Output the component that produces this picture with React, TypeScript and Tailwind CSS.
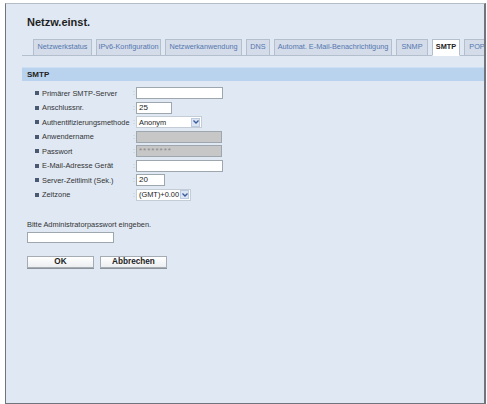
import { ReactNode } from "react";

const tabs = [
  { label: "Netzwerkstatus", w: "w-[59px]" },
  { label: "IPv6-Konfiguration", w: "w-[65px]" },
  { label: "Netzwerkanwendung", w: "w-[77px]" },
  { label: "DNS", w: "w-[24px]" },
  { label: "Automat. E-Mail-Benachrichtigung", w: "w-[118px]" },
  { label: "SNMP", w: "w-[32px]" },
  { label: "SMTP", w: "w-[28px]", active: true },
  { label: "POP3", w: "w-[30px]" },
];

function TextBox({ w, value, disabled }: { w: string; value?: string; disabled?: boolean }) {
  return (
    <div
      className={`${w} h-[12px] border border-[#9ea6ae] flex items-center px-[2px] text-[8px] leading-none ${
        disabled ? "bg-[#c7c7c7] text-[#8a8a8a] tracking-[1px]" : "bg-white text-[#222]"
      }`}
    >
      {value}
    </div>
  );
}

function SelectBox({ w, value }: { w: string; value: string }) {
  return (
    <div className={`${w} h-[12px] bg-white border border-[#c4ccd6] flex items-center text-[7.4px] leading-none text-[#222] whitespace-nowrap`}>
      <span className="flex-1 pl-[2px]">{value}</span>
      <span className="w-[9px] h-[9px] mr-[1px] bg-[#dbe5f4] border border-[#bccbe0] flex items-center justify-center">
        <svg width="6" height="4" viewBox="0 0 6 4">
          <path d="M0.5 0.5 L3 3 L5.5 0.5" fill="none" stroke="#3b5a99" strokeWidth="1.3" />
        </svg>
      </span>
    </div>
  );
}

function Row({ label, children }: { label: string; children: ReactNode }) {
  return (
    <div className="h-[14.5px] flex items-center pl-[13px]">
      <span className="w-[4px] h-[4px] bg-[#4a5870] mr-[3px]" />
      <span className="w-[91px] text-[7.4px] text-[#333]">{label}</span>
      <span className="w-[3px] text-[7px] text-[#a8b0ba]">:</span>
      {children}
    </div>
  );
}

export default function App() {
  return (
    <div className="w-[487px] h-[404px] bg-white pt-[3px] pl-[5px] font-['Liberation_Sans',Arial,sans-serif]">
      <div className="w-[481px] h-[401px] overflow-hidden bg-[#dfe8f3] border border-[#70757b] border-t-[#b4bcc6] border-r-2">
        <div className="pl-[21px] pt-[12px] text-[11px] leading-[12px] font-bold text-[#1f1f1f]">Netzw.einst.</div>

        <div className="mt-[11px] ml-[16px] pl-[11px] flex gap-[4px] border-b border-[#b3bfcd] whitespace-nowrap">
          {tabs.map((t) => (
            <div
              key={t.label}
              className={`${t.w} shrink-0 h-[17px] -mb-px flex items-center justify-center text-[7.3px] border border-[#b3bfcd] ${
                t.active
                  ? "bg-white border-b-white font-bold text-[#222]"
                  : "bg-[#d3dce8] text-[#5577b0]"
              }`}
            >
              {t.label}
            </div>
          ))}
        </div>

        <div className="mt-[11px] ml-[16px] h-[14px] bg-[#b9d3ee] border-t border-[#cddff2] flex items-center pl-[5px] text-[8px] font-bold text-[#222]">
          SMTP
        </div>

        <div className="mt-[5px] ml-[16px]">
          <Row label="Primärer SMTP-Server">
            <TextBox w="w-[87px]" />
          </Row>
          <Row label="Anschlussnr.">
            <TextBox w="w-[36px]" value="25" />
          </Row>
          <Row label="Authentifizierungsmethode">
            <SelectBox w="w-[66px]" value="Anonym" />
          </Row>
          <Row label="Anwendername">
            <TextBox w="w-[86px]" disabled />
          </Row>
          <Row label="Passwort">
            <TextBox w="w-[86px]" value="********" disabled />
          </Row>
          <Row label="E-Mail-Adresse Gerät">
            <TextBox w="w-[87px]" />
          </Row>
          <Row label="Server-Zeitlimit (Sek.)">
            <TextBox w="w-[29px]" value="20" />
          </Row>
          <Row label="Zeitzone">
            <SelectBox w="w-[55px]" value="(GMT)+0.00" />
          </Row>
        </div>

        <div className="ml-[21px] mt-[18px]">
          <div className="text-[7.4px] leading-[10px] text-[#333]">Bitte Administratorpasswort eingeben.</div>
          <div className="mt-[2px] w-[87px] h-[11px] bg-white border border-[#9ea6ae]" />
          <div className="mt-[13px] flex gap-[6px]">
            <button className="w-[67px] h-[12px] bg-gradient-to-b from-white to-[#eceef0] border border-[#a5acb4] shadow-[0_1px_0_#8c939b] text-[8.2px] leading-none font-bold text-[#222]">
              OK
            </button>
            <button className="w-[67px] h-[12px] bg-gradient-to-b from-white to-[#eceef0] border border-[#a5acb4] shadow-[0_1px_0_#8c939b] text-[8.2px] leading-none font-bold text-[#222]">
              Abbrechen
            </button>
          </div>
        </div>
      </div>
    </div>
  );
}
